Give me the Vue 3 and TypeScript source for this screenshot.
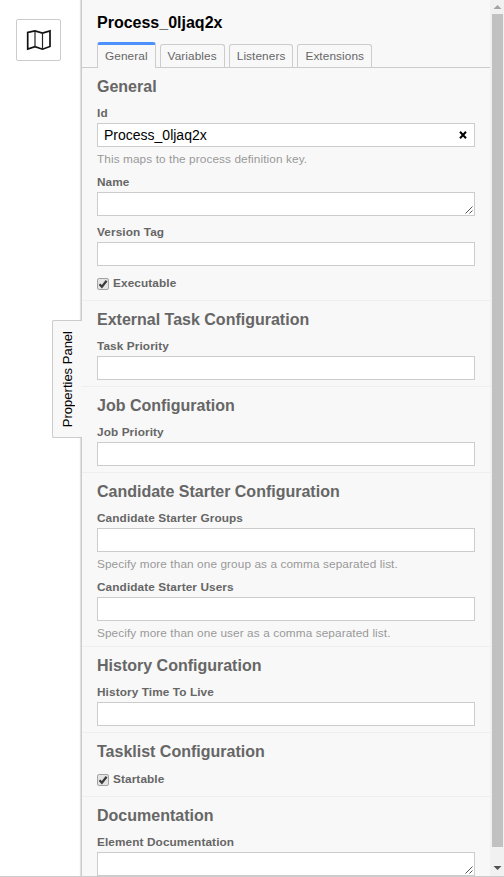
<script setup lang="ts">
import { ref } from 'vue'

interface Entry {
  kind: 'text' | 'area' | 'check'
  label: string
  value?: string
  hint?: string
}
interface Group {
  title: string
  entries: Entry[]
}

const tabs: string[] = ['General', 'Variables', 'Listeners', 'Extensions']
const activeTab = ref('General')

const groups = ref<Group[]>([
  {
    title: 'General',
    entries: [
      { kind: 'text', label: 'Id', value: 'Process_0ljaq2x', hint: 'This maps to the process definition key.' },
      { kind: 'area', label: 'Name' },
      { kind: 'text', label: 'Version Tag' },
      { kind: 'check', label: 'Executable' },
    ],
  },
  { title: 'External Task Configuration', entries: [{ kind: 'text', label: 'Task Priority' }] },
  { title: 'Job Configuration', entries: [{ kind: 'text', label: 'Job Priority' }] },
  {
    title: 'Candidate Starter Configuration',
    entries: [
      { kind: 'text', label: 'Candidate Starter Groups', hint: 'Specify more than one group as a comma separated list.' },
      { kind: 'text', label: 'Candidate Starter Users', hint: 'Specify more than one user as a comma separated list.' },
    ],
  },
  { title: 'History Configuration', entries: [{ kind: 'text', label: 'History Time To Live' }] },
  { title: 'Tasklist Configuration', entries: [{ kind: 'check', label: 'Startable' }] },
  { title: 'Documentation', entries: [{ kind: 'area', label: 'Element Documentation' }] },
])
</script>

<template>
  <div class="modeler">
    <main class="canvas">
      <button class="minimap" type="button" aria-label="Toggle minimap">
        <svg width="25" height="22" viewBox="0 0 25 22" fill="none" stroke="#111">
          <path d="M9 1.9 1.7 3.4V20L9 17.7 16.5 20.2 24 17.5V1.9L16.5 4 9 1.9Z" stroke-width="1.7" />
          <path d="M9 1.9V17.7M16.5 4V20.2" stroke="#222" stroke-width="1.2" />
        </svg>
      </button>
    </main>

    <aside class="panel">
      <div class="toggle"><span>Properties Panel</span></div>
      <div class="content">
        <h1 class="title">Process_0ljaq2x</h1>
        <nav class="tabs">
          <a
            v-for="tab in tabs"
            :key="tab"
            class="tab"
            :class="{ active: tab === activeTab }"
            @click="activeTab = tab"
          >{{ tab }}</a>
        </nav>
        <section v-for="group in groups" :key="group.title" class="group">
          <h2>{{ group.title }}</h2>
          <div v-for="entry in group.entries" :key="entry.label" class="entry" :class="entry.kind">
            <template v-if="entry.kind === 'check'">
              <svg class="box" width="12" height="12" viewBox="0 0 12 12">
                <rect x=".5" y=".5" width="11" height="11" rx="1.5" fill="#e4e4e4" stroke="#a3a3a3" />
                <path d="M2.5 6.2 4.9 8.7 9.6 2.8" fill="none" stroke="#3c3c3c" stroke-width="2.3" />
              </svg>
              <span class="label">{{ entry.label }}</span>
            </template>
            <template v-else>
              <div class="label">{{ entry.label }}</div>
              <div class="field">
                <span>{{ entry.value }}</span>
                <svg v-if="entry.value" class="clear" width="8" height="8" viewBox="0 0 8 8">
                  <path d="M1 .8 7 7.2M7 .8 1 7.2" stroke="#000" stroke-width="2" />
                </svg>
                <svg v-if="entry.kind === 'area'" class="grip" width="8" height="8" viewBox="0 0 8 8">
                  <path d="M.5 7.5 7.5 .5M4.5 7.5 7.5 4.5" stroke="#555" stroke-width="1" />
                </svg>
              </div>
              <div v-if="entry.hint" class="hint">{{ entry.hint }}</div>
            </template>
          </div>
        </section>
      </div>
      <div class="scrollbar">
        <svg width="14" height="14" viewBox="0 0 14 14"><path d="M3.5 9 7.5 5 11.5 9Z" fill="#a3a3a3" /></svg>
        <div class="thumb"></div>
        <svg width="14" height="29" viewBox="0 0 14 29"><path d="M3.5 19 7.5 23 11.5 19Z" fill="#505050" /></svg>
      </div>
    </aside>
  </div>
</template>

<style>
body {
  margin: 0;
  overflow: hidden;
}
</style>

<style scoped>
* {
  box-sizing: border-box;
}
.modeler {
  display: flex;
  width: 504px;
  height: 877px;
  overflow: hidden;
  border-bottom: 1px solid #ccc;
  background: #fff;
  font-family: "Liberation Sans", Arial, sans-serif;
}
.canvas {
  width: 81px;
  padding: 19px 0 0 16px;
}
.minimap {
  display: flex;
  align-items: center;
  justify-content: center;
  width: 45px;
  height: 42px;
  padding: 0;
  border: 1px solid #ccc;
  border-radius: 2px;
  background: #fff;
}
.panel {
  position: relative;
  display: flex;
  width: 423px;
  border-left: 1px solid #ccc;
  background: #f8f8f8;
  box-shadow: -1px 0 1px rgba(0, 0, 0, 0.12);
}
.toggle {
  position: absolute;
  left: -30px;
  top: 320px;
  display: flex;
  align-items: center;
  justify-content: center;
  width: 30px;
  height: 118px;
  border: 1px solid #ccc;
  border-right: 0;
  border-radius: 2px 0 0 2px;
  background: #f8f8f8;
  font-size: 13px;
}
.toggle span {
  writing-mode: vertical-rl;
  transform: rotate(180deg);
  white-space: nowrap;
}
.content {
  width: 408px;
  overflow: hidden;
}
.title {
  margin: 0;
  padding: 13px 15px 0;
  height: 42px;
  font-size: 16px;
  line-height: 20px;
  color: #000;
}
.tabs {
  display: flex;
  align-items: flex-end;
  gap: 4px;
  height: 26px;
  padding: 0 15px;
  border-bottom: 1px solid #ccc;
}
.tab {
  height: 23px;
  padding: 0 7px;
  border: 1px solid #ccc;
  border-bottom: 0;
  border-radius: 3px 3px 0 0;
  font-size: 11.8px;
  letter-spacing: 0.09px;
  line-height: 23px;
  color: #666;
}
.tab.active {
  height: 26px;
  margin-bottom: -1px;
  border-top: 3px solid #4d90ff;
  background: #f8f8f8;
}
.group {
  padding: 0 15px;
}
.group + .group {
  border-top: 1px solid #eee;
}
h2 {
  margin: 0;
  height: 35px;
  padding-top: 9px;
  font-size: 16px;
  line-height: 20px;
  color: #666;
}
.entry {
  padding-bottom: 6px;
}
.label {
  font-size: 11.8px;
  letter-spacing: 0.1px;
  font-weight: bold;
  line-height: 20px;
  color: #666;
}
.field {
  display: flex;
  align-items: center;
  justify-content: space-between;
  height: 24px;
  padding: 0 7px 0 6px;
  border: 1px solid #ccc;
  background: #fff;
  font-size: 14px;
  color: #000;
}
.area .field {
  padding: 0 1px 1px;
  align-items: flex-end;
}
.hint {
  height: 19px;
  padding-top: 2px;
  font-size: 11.8px;
  letter-spacing: 0.095px;
  line-height: 20px;
  color: #999;
}
.check {
  display: flex;
  gap: 4px;
  height: 28px;
  padding: 0;
}
.check .box {
  margin-top: 6px;
}
.check .label {
  margin-top: 1px;
}
.scrollbar {
  display: flex;
  flex-direction: column;
  width: 14px;
  background: #f1f1f1;
}
.scrollbar svg {
  flex: none;
}
.thumb {
  flex: 1;
  margin: 0 1px 0 2px;
  background: #c1c1c1;
}
</style>
